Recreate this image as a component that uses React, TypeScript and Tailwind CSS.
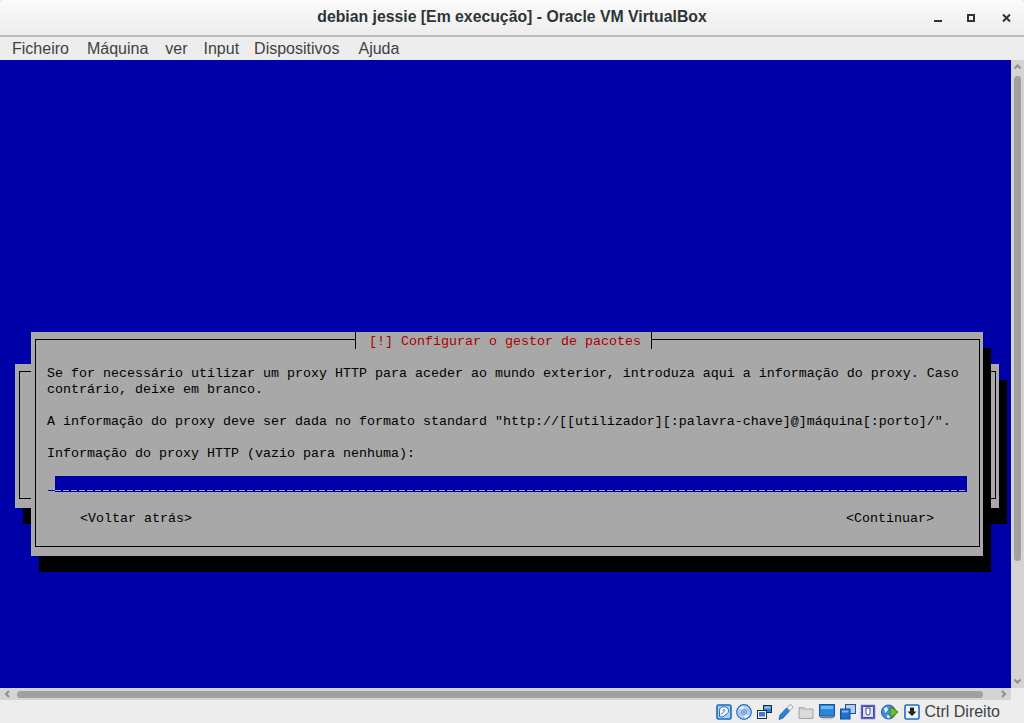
import React from "react";

const mono = "font-['Liberation_Mono',monospace] text-[13.33px] leading-[16px] whitespace-pre";

function Disk() {
  return (
    <svg width="16" height="16" viewBox="0 0 16 16">
      <rect x="1" y="1" width="14" height="14" rx="1.500" fill="#a9d0f4" stroke="#1a68c0" strokeWidth="1.600" />
      <path d="M3.500 12.500V6.500C3.500 4 5.500 2.800 8 2.800s4.500 1.500 4.500 4c0 2.500-2 3.200-3.500 4l-2 2.200z" fill="#f4f9fd" stroke="#1a5fb0" strokeWidth=".9" />
      <circle cx="8" cy="6.500" r="1.400" fill="#79addf" />
      <path d="M5 10.500l2.500-2.500" stroke="#1a5fb0" strokeWidth=".9" />
    </svg>
  );
}
function Cd() {
  return (
    <svg width="16" height="16" viewBox="0 0 16 16">
      <circle cx="8" cy="8" r="7.300" fill="#a8d4f5" stroke="#2a6fc0" strokeWidth="1.200" />
      <path d="M3 4.500a6 6 0 0 1 5-2.500l-1 4zM13 11.500a6 6 0 0 1-5 2.500l1-4z" fill="#e6f4fc" />
      <path d="M12.500 4a6 6 0 0 1 1.500 3l-4 .5zM3.500 12a6 6 0 0 1-1.500-3l4-.5z" fill="#d0a8e6" />
      <circle cx="8" cy="8" r="2.300" fill="#fff" stroke="#2a6fc0" />
      <circle cx="8" cy="8" r=".9" fill="#2a6fc0" />
    </svg>
  );
}
function Net() {
  return (
    <svg width="16" height="16" viewBox="0 0 16 16">
      <rect x="6.500" y="1.500" width="8" height="7" fill="#2f7fd8" stroke="#1d2b3c" />
      <rect x="7.500" y="2.500" width="6" height="2" fill="#9cc8f2" />
      <rect x="0.500" y="6.500" width="9" height="8" fill="#f4f4f4" stroke="#1d2b3c" />
      <rect x="2" y="8" width="6" height="4.500" fill="#2f7fd8" />
    </svg>
  );
}
function Usb() {
  return (
    <svg width="16" height="16" viewBox="0 0 16 16">
      <path d="M1 15.500l1-4.500 6.500-7 3 3L5 14z" fill="#2b84dc" stroke="#1558a8" strokeWidth=".8" />
      <path d="M9 3.500l2-2c1-1 2.500-.5 3 0s1 2 0 3l-2 2z" fill="#e8eff6" stroke="#7d95ad" strokeWidth=".8" />
    </svg>
  );
}
function Folder() {
  return (
    <svg width="16" height="16" viewBox="0 0 16 16">
      <path d="M1 3.500h5l1 1.500h8v9.500H1z" fill="#d0d0d0" stroke="#a8a8a8" />
      <rect x="2" y="6.500" width="12" height="7" fill="#dcdcdc" />
    </svg>
  );
}
function Display() {
  return (
    <svg width="16" height="16" viewBox="0 0 16 16">
      <rect x="0.500" y="0.500" width="15" height="11.500" fill="#2a86e0" stroke="#1c4f8f" />
      <rect x="2" y="2" width="12" height="3" fill="#6db4f2" />
      <rect x="1" y="12.500" width="14" height="1.500" fill="#6f7780" />
      <rect x="3" y="14" width="10" height="1.500" fill="#c9ced3" />
    </svg>
  );
}
function Windows() {
  return (
    <svg width="16" height="16" viewBox="0 0 16 16">
      <rect x="5.500" y="0.500" width="10" height="9" fill="#aecdf0" stroke="#2b4f90" />
      <rect x="0.500" y="5" width="9.500" height="10" fill="#1f6fd0" stroke="#134b94" />
      <rect x="2" y="6.500" width="6.500" height="2" fill="#7fb8f0" />
    </svg>
  );
}
function Chip() {
  return (
    <svg width="16" height="16" viewBox="0 0 16 16">
      <rect x="1" y="1" width="14" height="14" fill="#4d56b5" stroke="#7f86c9" strokeDasharray="1.500 1" />
      <rect x="2.500" y="2.500" width="11" height="11" rx="1" fill="#dfe3f5" stroke="#3c449e" />
      <path d="M6 4v5a2 2 0 0 0 4 0V4z" fill="#fff" stroke="#3c449e" />
    </svg>
  );
}
function Globe() {
  return (
    <svg width="18" height="16" viewBox="0 0 18 16">
      <circle cx="7.500" cy="8" r="7" fill="#3f8fdc" stroke="#1b5fa8" />
      <path d="M3 4l3-1 1 3-3 3zM6 11l3 1-1 2.500-2-1z" fill="#e8f3fb" />
      <path d="M9 5l1 0 0-2 7 5-7 6 0-3-1 0z" fill="#74bb2b" stroke="#3d7d12" />
    </svg>
  );
}
function Capture() {
  return (
    <svg width="16" height="16" viewBox="0 0 16 16">
      <rect x="1" y="1" width="14" height="14" rx="1.500" fill="#f1f4f8" stroke="#1d6cc4" strokeWidth="1.600" />
      <path d="M6 3.500h4v4h2.500L8 12 3.500 7.500H6z" fill="#222" />
    </svg>
  );
}

export default function App() {
  return (
    <div className="w-[1024px] h-[723px] flex flex-col overflow-hidden bg-[#ededed] font-['Liberation_Sans',Arial,sans-serif]">
      <header className="h-[37px] shrink-0 flex items-center justify-center relative rounded-t-[5px] border-b-2 border-[#bdbdbb] bg-gradient-to-b from-[#fbfbfb] to-[#ededed]">
        <span className="text-[15.800px] font-bold text-[#2e3436] mt-[-1px]">debian jessie [Em execução] - Oracle VM VirtualBox</span>
        <div className="absolute right-0 top-0 w-[100px] h-[35px]">
          <svg width="100" height="35" viewBox="0 0 100 35" fill="none" stroke="#2e3436" strokeWidth="2">
            <path d="M10 21h8" />
            <rect x="44" y="15" width="6" height="6" />
            <path d="M79 14.500l7 7M86 14.500l-7 7" />
          </svg>
        </div>
      </header>
      <nav className="h-[23px] shrink-0 flex items-center pl-[12px] text-[16px] text-[#3c4244] bg-[#ededed]">
        <span>Ficheiro</span>
        <span className="ml-[18px]">Máquina</span>
        <span className="ml-[17px]">ver</span>
        <span className="ml-[16px]">Input</span>
        <span className="ml-[15px]">Dispositivos</span>
        <span className="ml-[19px]">Ajuda</span>
      </nav>

      <div className="h-[628px] shrink-0 flex">
        <main className="w-[1011px] relative overflow-hidden bg-[#0000a8] text-black">
          <div className="absolute left-[15px] top-[304px] w-[984px] h-[144px] bg-[#a8a8a8] shadow-[8px_16px_0_0_#000] p-[7px_3px_9px_4px]">
            <div className="w-full h-full border border-black" />
          </div>
          <div className="absolute left-[31px] top-[272px] w-[952px] h-[224px] bg-[#a8a8a8] shadow-[8px_16px_0_0_#000] pt-[7px] pl-[4px] pr-[3px] pb-[9px]">
            <div className="relative w-full h-full border border-black pl-[11px] pt-[26px]">
              <div className={`absolute left-[319px] top-[-8px] h-[17px] w-[297px] bg-[#a8a8a8] border-x border-black text-[#a80000] pl-[13px] pt-[2px] ${mono}`}>[!] Configurar o gestor de pacotes</div>
              <p className={mono}>Se for necessário utilizar um proxy HTTP para aceder ao mundo exterior, introduza aqui a informação do proxy. Caso</p>
              <p className={mono}>contrário, deixe em branco.</p>
              <p className={`mt-[16px] ${mono}`}>A informação do proxy deve ser dada no formato standard "http://[[utilizador][:palavra-chave]@]máquina[:porto]/".</p>
              <p className={`mt-[16px] ${mono}`}>Informação do proxy HTTP (vazio para nenhuma):</p>
              <div className="mt-[14px] ml-[1px] w-[919px] h-[16px] flex items-end">
                <div className="w-[7px] h-[1px] mb-[1px] bg-[#0000a8]" />
                <div className="flex-1 h-[16px] bg-[#0000a8] flex flex-col justify-end pb-[1px]">
                  <div className="h-[1px] bg-[repeating-linear-gradient(90deg,#a8a8a8_0,#a8a8a8_6px,#0000a8_6px,#0000a8_8px)]" />
                </div>
              </div>
              <div className={`mt-[19px] flex justify-between pl-[33px] pr-[45px] ${mono}`}>
                <span>&lt;Voltar atrás&gt;</span>
                <span>&lt;Continuar&gt;</span>
              </div>
            </div>
          </div>
        </main>
        <aside className="w-[13px] bg-[#d4d4d4] flex flex-col items-center">
          <svg width="9" height="7" viewBox="0 0 9 7" className="mt-[3px]" fill="none" stroke="#8f8f8f" strokeWidth="2">
            <path d="M1.500 5.500l3-3 3 3" />
          </svg>
          <div className="mt-[6px] w-[7px] h-[485px] rounded-full bg-[#a0a0a0]" />
          <svg width="9" height="7" viewBox="0 0 9 7" className="mt-auto mb-[3px]" fill="none" stroke="#8f8f8f" strokeWidth="2">
            <path d="M1.500 1.500l3 3 3-3" />
          </svg>
        </aside>
      </div>

      <div className="h-[12px] shrink-0 flex">
        <div className="w-[1011px] h-full bg-[#d4d4d4] flex items-center pl-[3px]">
          <svg width="9" height="8" viewBox="0 0 9 8" fill="none" stroke="#8f8f8f" strokeWidth="2">
            <path d="M6 1L3 4l3 3" />
          </svg>
          <div className="ml-[5px] w-[966px] h-[7px] rounded-full bg-[#a0a0a0]" />
          <svg width="9" height="8" viewBox="0 0 9 8" className="ml-[16px]" fill="none" stroke="#8f8f8f" strokeWidth="2">
            <path d="M3 1l3 3-3 3" />
          </svg>
        </div>
        <div className="w-[13px] bg-[#ededed]" />
      </div>

      <footer className="h-[23px] shrink-0 flex items-center justify-end pr-[24px] gap-[4.700px] text-[16px] text-[#3c4244]">
        <Disk />
        <Cd />
        <Net />
        <Usb />
        <Folder />
        <Display />
        <Windows />
        <Chip />
        <Globe />
        <Capture />
        <span>Ctrl Direito</span>
      </footer>
    </div>
  );
}
